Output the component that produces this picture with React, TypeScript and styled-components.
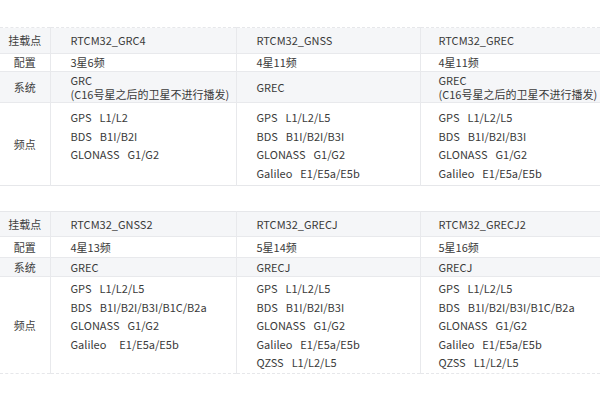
import React from 'react';
import styled, { createGlobalStyle } from 'styled-components';

const GlobalStyle = createGlobalStyle`
  html, body {
    margin: 0;
    padding: 0;
    background: #ffffff;
  }
  body {
    font-family: "Noto Sans CJK SC", "Noto Sans", sans-serif;
    color: #3a3a3a;
  }
`;

const Page = styled.div`
  width: 600px;
  height: 400px;
  display: flex;
  flex-direction: column;
  padding-top: 27px;
  box-sizing: border-box;
  overflow: hidden;
`;

const Table = styled.table<{ $topStyle: string; $bottomStyle: string; $gap: number }>`
  width: 600px;
  border-collapse: collapse;
  table-layout: fixed;
  font-size: 11px;
  margin-bottom: ${({ $gap }) => $gap}px;
  border-top: 1px ${({ $topStyle }) => $topStyle} #e6e7ea;
  border-bottom: 1px ${({ $bottomStyle }) => $bottomStyle} #e6e7ea;
`;

const Row = styled.tr<{ $shaded?: boolean; $h: number }>`
  height: ${({ $h }) => $h}px;
  background: ${({ $shaded }) => ($shaded ? '#f5f6f8' : '#ffffff')};
  & + & {
    border-top: 1px solid #e8e9ec;
  }
`;

const Label = styled.td`
  width: 50px;
  padding: 0;
  text-align: center;
  vertical-align: middle;
  color: #404040;
  border-right: 1px solid #e8e9ec;
  line-height: 15px;
`;

const Cell = styled.td<{ $indent: number; $top?: number }>`
  padding: ${({ $top }) => ($top !== undefined ? `${$top}px` : '0')} 0 0 ${({ $indent }) => $indent}px;
  vertical-align: ${({ $top }) => ($top !== undefined ? 'top' : 'middle')};
  line-height: 15px;
  color: #3a3a3a;
  & + & {
    border-left: 1px solid #e8e9ec;
  }
`;

const SysLine = styled.div`
  line-height: 14.5px;
  white-space: nowrap;
`;

const FreqLine = styled.div`
  line-height: 18.5px;
  white-space: nowrap;
`;

const Sys = styled.span<{ $wide?: boolean }>`
  display: inline-block;
  margin-right: ${({ $wide }) => ($wide ? 13 : 8)}px;
`;

type Col = {
  mount: string;
  config: string;
  system: string[];
  freqs: [string, string][];
  wideGalileo?: boolean;
};

const tables: Col[][] = [
  [
    {
      mount: 'RTCM32_GRC4',
      config: '3星6频',
      system: ['GRC', '(C16号星之后的卫星不进行播发)'],
      freqs: [
        ['GPS', 'L1/L2'],
        ['BDS', 'B1I/B2I'],
        ['GLONASS', 'G1/G2'],
      ],
    },
    {
      mount: 'RTCM32_GNSS',
      config: '4星11频',
      system: ['GREC'],
      freqs: [
        ['GPS', 'L1/L2/L5'],
        ['BDS', 'B1I/B2I/B3I'],
        ['GLONASS', 'G1/G2'],
        ['Galileo', 'E1/E5a/E5b'],
      ],
    },
    {
      mount: 'RTCM32_GREC',
      config: '4星11频',
      system: ['GREC', '(C16号星之后的卫星不进行播发)'],
      freqs: [
        ['GPS', 'L1/L2/L5'],
        ['BDS', 'B1I/B2I/B3I'],
        ['GLONASS', 'G1/G2'],
        ['Galileo', 'E1/E5a/E5b'],
      ],
    },
  ],
  [
    {
      mount: 'RTCM32_GNSS2',
      config: '4星13频',
      system: ['GREC'],
      wideGalileo: true,
      freqs: [
        ['GPS', 'L1/L2/L5'],
        ['BDS', 'B1I/B2I/B3I/B1C/B2a'],
        ['GLONASS', 'G1/G2'],
        ['Galileo', 'E1/E5a/E5b'],
      ],
    },
    {
      mount: 'RTCM32_GRECJ',
      config: '5星14频',
      system: ['GRECJ'],
      freqs: [
        ['GPS', 'L1/L2/L5'],
        ['BDS', 'B1I/B2I/B3I'],
        ['GLONASS', 'G1/G2'],
        ['Galileo', 'E1/E5a/E5b'],
        ['QZSS', 'L1/L2/L5'],
      ],
    },
    {
      mount: 'RTCM32_GRECJ2',
      config: '5星16频',
      system: ['GRECJ'],
      freqs: [
        ['GPS', 'L1/L2/L5'],
        ['BDS', 'B1I/B2I/B3I/B1C/B2a'],
        ['GLONASS', 'G1/G2'],
        ['Galileo', 'E1/E5a/E5b'],
        ['QZSS', 'L1/L2/L5'],
      ],
    },
  ],
];

const layouts = [
  { rows: [26, 18, 31, 83], freqTop: 5, top: 'dashed', bottom: 'solid', gap: 25 },
  { rows: [25, 21, 19, 97], freqTop: 2, top: 'solid', bottom: 'dashed', gap: 0 },
];

const indents = [20, 20, 18];

const SpecTable: React.FC<{ cols: Col[]; index: number }> = ({ cols, index }) => {
  const l = layouts[index];
  return (
    <Table $topStyle={l.top} $bottomStyle={l.bottom} $gap={l.gap}>
      <colgroup>
        <col style={{ width: 50 }} />
        <col style={{ width: 186 }} />
        <col style={{ width: 184 }} />
        <col style={{ width: 180 }} />
      </colgroup>
      <tbody>
        <Row $shaded $h={l.rows[0]}>
          <Label>挂载点</Label>
          {cols.map((c, i) => (
            <Cell key={i} $indent={indents[i]}>
              {c.mount}
            </Cell>
          ))}
        </Row>
        <Row $h={l.rows[1]}>
          <Label>配置</Label>
          {cols.map((c, i) => (
            <Cell key={i} $indent={indents[i]}>
              {c.config}
            </Cell>
          ))}
        </Row>
        <Row $shaded $h={l.rows[2]}>
          <Label>系统</Label>
          {cols.map((c, i) => (
            <Cell key={i} $indent={indents[i]}>
              {c.system.map((s, k) => (
                <SysLine key={k}>{s}</SysLine>
              ))}
            </Cell>
          ))}
        </Row>
        <Row $h={l.rows[3]}>
          <Label>频点</Label>
          {cols.map((c, i) => (
            <Cell key={i} $indent={indents[i]} $top={l.freqTop}>
              {c.freqs.map(([sys, band]) => (
                <FreqLine key={sys}>
                  <Sys $wide={c.wideGalileo && sys === 'Galileo'}>{sys}</Sys>
                  {band}
                </FreqLine>
              ))}
            </Cell>
          ))}
        </Row>
      </tbody>
    </Table>
  );
};

const App: React.FC = () => {
  return (
    <>
      <GlobalStyle />
      <Page>
        {tables.map((cols, i) => (
          <SpecTable key={i} cols={cols} index={i} />
        ))}
      </Page>
    </>
  );
};

export default App;
